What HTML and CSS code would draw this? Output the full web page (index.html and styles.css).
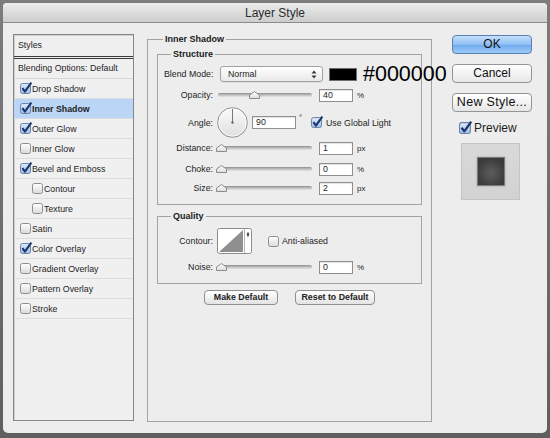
FILE: index.html
```html
<!DOCTYPE html>
<html>
<head>
<meta charset="utf-8">
<title>Layer Style</title>
<link rel="stylesheet" href="styles.css">
</head>
<body>
<svg class="defs" width="0" height="0" aria-hidden="true">
  <defs>
    <linearGradient id="g-off" x1="0" y1="0" x2="0" y2="1"><stop offset="0" stop-color="#ffffff"/><stop offset="1" stop-color="#dadada"/></linearGradient>
    <linearGradient id="g-on" x1="0" y1="0" x2="0" y2="1"><stop offset="0" stop-color="#dfeafa"/><stop offset="1" stop-color="#9fbfe8"/></linearGradient>
    <linearGradient id="g-thumb" x1="0" y1="0" x2="0" y2="1"><stop offset="0" stop-color="#ffffff"/><stop offset="1" stop-color="#dcdcdc"/></linearGradient>
    <linearGradient id="g-dial" x1="0" y1="0" x2="0" y2="1"><stop offset="0" stop-color="#fbfbfb"/><stop offset="1" stop-color="#dedede"/></linearGradient>
    <symbol id="cb-off" viewBox="0 0 12 12"><rect x="0.5" y="1.5" width="10" height="10" rx="2" fill="url(#g-off)" stroke="#8d8d8d"/></symbol>
    <symbol id="cb-on" viewBox="0 0 12 12"><rect x="0.5" y="1.5" width="10" height="10" rx="2" fill="url(#g-on)" stroke="#6c82a6"/><path d="M2.4 6.2 L4.9 9.6 L11.3 0.6" fill="none" stroke="#1c3670" stroke-width="2.1" stroke-linejoin="round"/></symbol>
    <symbol id="thumb" viewBox="0 0 11 8"><path d="M0.5 7.5 V4 L5.5 0.6 L10.5 4 V7.5 Z" fill="url(#g-thumb)" stroke="#8b8b8b"/></symbol>
  </defs>
</svg>
<div class="window">
  <div class="titlebar">Layer Style</div>
  <div class="body">
    <div class="styles">
      <div class="sl-head">Styles</div>
      <div class="sl-blend">Blending Options: Default</div>
      <div class="sl-row"><svg class="cb"><use href="#cb-on"/></svg>Drop Shadow</div>
      <div class="sl-row is-selected"><svg class="cb"><use href="#cb-on"/></svg>Inner Shadow</div>
      <div class="sl-row"><svg class="cb"><use href="#cb-on"/></svg>Outer Glow</div>
      <div class="sl-row"><svg class="cb"><use href="#cb-off"/></svg>Inner Glow</div>
      <div class="sl-row"><svg class="cb"><use href="#cb-on"/></svg>Bevel and Emboss</div>
      <div class="sl-row is-sub"><svg class="cb"><use href="#cb-off"/></svg>Contour</div>
      <div class="sl-row is-sub"><svg class="cb"><use href="#cb-off"/></svg>Texture</div>
      <div class="sl-row"><svg class="cb"><use href="#cb-off"/></svg>Satin</div>
      <div class="sl-row"><svg class="cb"><use href="#cb-on"/></svg>Color Overlay</div>
      <div class="sl-row"><svg class="cb"><use href="#cb-off"/></svg>Gradient Overlay</div>
      <div class="sl-row"><svg class="cb"><use href="#cb-off"/></svg>Pattern Overlay</div>
      <div class="sl-row"><svg class="cb"><use href="#cb-off"/></svg>Stroke</div>
    </div>

    <fieldset class="panel">
      <legend>Inner Shadow</legend>
      <fieldset class="group structure">
        <legend>Structure</legend>
        <div class="row r-a">
          <span class="lbl">Blend Mode:</span>
          <div class="sel"><span>Normal</span>
            <svg class="sel-arrows" width="6" height="9" viewBox="0 0 6 9"><path d="M0.5 3.5 L3 0.5 L5.5 3.5 Z M0.5 5.5 L3 8.5 L5.5 5.5 Z" fill="#3a3a3a"/></svg>
          </div>
          <span class="swatch"></span>
          <span class="hex">#000000</span>
        </div>
        <div class="row r-b">
          <span class="lbl">Opacity:</span>
          <div class="slider"><div class="track"></div><svg class="thumb" style="--v:0.4"><use href="#thumb"/></svg></div>
          <span class="num">40</span><span class="unit">%</span>
        </div>
        <div class="row r-c">
          <span class="lbl">Angle:</span>
          <svg class="dial" width="31" height="31" viewBox="0 0 31 31">
            <circle cx="15.5" cy="15.5" r="14.8" fill="url(#g-dial)" stroke="#8f8f8f"/>
            <circle cx="15.5" cy="15.5" r="13.6" fill="none" stroke="#ffffff" stroke-opacity="0.8"/>
            <line x1="15.5" y1="15.5" x2="15.5" y2="1.8" stroke="#777" stroke-width="1"/>
            <circle cx="15.5" cy="15.5" r="1.2" fill="#666"/>
          </svg>
          <span class="num wide">90</span><span class="deg">°</span>
          <svg class="cb"><use href="#cb-on"/></svg><span class="cb-text">Use Global Light</span>
        </div>
        <div class="row r-d">
          <span class="lbl">Distance:</span>
          <div class="slider"><div class="track"></div><svg class="thumb" style="--v:0"><use href="#thumb"/></svg></div>
          <span class="num">1</span><span class="unit">px</span>
        </div>
        <div class="row r-e">
          <span class="lbl">Choke:</span>
          <div class="slider"><div class="track"></div><svg class="thumb" style="--v:0"><use href="#thumb"/></svg></div>
          <span class="num">0</span><span class="unit">%</span>
        </div>
        <div class="row r-f">
          <span class="lbl">Size:</span>
          <div class="slider"><div class="track"></div><svg class="thumb" style="--v:0"><use href="#thumb"/></svg></div>
          <span class="num">2</span><span class="unit">px</span>
        </div>
      </fieldset>

      <fieldset class="group quality">
        <legend>Quality</legend>
        <div class="row r-contour">
          <span class="lbl">Contour:</span>
          <svg class="contour" width="35" height="26" viewBox="0 0 35 26">
            <rect x="0.5" y="0.5" width="34" height="25" rx="2" fill="#ffffff" stroke="#8c8c8c"/>
            <path d="M2 24 L26 2 L26 24 Z" fill="#8f8f8f"/>
            <line x1="27.5" y1="1" x2="27.5" y2="25" stroke="#b5b5b5"/>
            <path d="M29.6 5.5 H32.4 L31 9.5 Z" fill="#333"/>
            <line x1="31" y1="4" x2="31" y2="6" stroke="#333" stroke-width="0.8"/>
          </svg>
          <svg class="cb cb-anti"><use href="#cb-off"/></svg><span class="cb-text">Anti-aliased</span>
        </div>
        <div class="row r-noise">
          <span class="lbl">Noise:</span>
          <div class="slider"><div class="track"></div><svg class="thumb" style="--v:0"><use href="#thumb"/></svg></div>
          <span class="num">0</span><span class="unit">%</span>
        </div>
      </fieldset>

      <div class="defaults">
        <button class="btn-small w-make">Make Default</button>
        <button class="btn-small w-reset">Reset to Default</button>
      </div>
    </fieldset>

    <div class="actions">
      <button class="btn btn-ok">OK</button>
      <button class="btn">Cancel</button>
      <button class="btn btn-new">New Style...</button>
      <div class="preview-row"><svg class="cb cb-big"><use href="#cb-on"/></svg><span>Preview</span></div>
      <div class="preview"><div class="preview-swatch"></div></div>
    </div>
  </div>
</div>
</body>
</html>
```
FILE: styles.css
```css
* { box-sizing: border-box; }
html, body { margin: 0; height: 100%; }
body {
  background: linear-gradient(#7c7c7c, #5f5f5f);
  font-family: "Liberation Sans", Arial, sans-serif;
  font-size: 8.8px;
  color: #1e1e1e;
  overflow: hidden;
}
.defs { position: absolute; width: 0; height: 0; overflow: hidden; }

.window {
  margin: 3px 3px 0;
  height: 430px;
  background: #ededed;
  border-radius: 4px 4px 5px 5px;
  display: flex;
  flex-direction: column;
  overflow: hidden;
}
.titlebar {
  flex: none;
  height: 20px;
  border-bottom: 1px solid #8c8c8c;
  background: linear-gradient(#ececec, #cdcdcd);
  text-align: center;
  font-size: 12px;
  line-height: 20px;
  color: #2c2c2c;
}
.body {
  flex: 1;
  display: flex;
  align-items: stretch;
  padding: 11px 15px 12px 10px;
}

/* styles list */
.styles {
  flex: none;
  width: 121px;
  border: 1px solid #868686;
  box-shadow: inset 1px 1px 0 #d0d0d0;
  background: #f0f0f0;
}
.sl-head {
  height: 24px;
  border-bottom: 3px double #3a3a3a;
  padding-left: 4px;
  line-height: 21px;
}
.sl-blend {
  height: 20px;
  border-bottom: 1px solid #d6d6d6;
  padding-left: 4px;
  line-height: 19px;
}
.sl-row {
  height: 20px;
  border-bottom: 1px solid #dcdcdc;
  display: flex;
  align-items: center;
  padding-left: 6px;
}
.sl-row.is-sub { padding-left: 18px; }
.sl-row.is-selected { background: #bad5f6; font-weight: bold; }
.cb { flex: none; width: 12px; height: 12px; margin-top: -1px; }
.sl-row .cb { margin-right: 0; }

/* main panel */
fieldset { margin: 0; padding: 0; border: 1px solid #a3a3a3; min-width: 0; }
legend { padding: 0 2px; font-weight: bold; font-size: 9px; line-height: 12px; color: #1a1a1a; }
.panel {
  flex: none;
  width: 285px;
  margin: -1px 0 -1px 13px;
  padding: 3px 9px 0 9px;
}
.panel > legend { margin-left: 6px; }
.group { padding: 6px 9px 9px 6px; }
.group > legend { margin-left: 7px; }
.quality { margin-top: 5px; }

.row { display: flex; align-items: center; }
.lbl { flex: none; width: 49px; margin-right: 5px; text-align: right; white-space: nowrap; }
.r-a { height: 16px; }
.r-b { height: 14px; margin-top: 6px; }
.r-c { height: 31px; margin-top: 5px; }
.r-d { height: 14px; margin-top: 3px; }
.r-e { height: 14px; margin-top: 7px; }
.r-f { height: 14px; margin-top: 5px; }
.r-contour { height: 26px; }
.r-noise { height: 14px; margin-top: 6px; }

.sel {
  flex: none;
  margin-left: 2px;
  width: 103px;
  height: 16px;
  border: 1px solid #a2a2a2;
  border-radius: 3px;
  background: linear-gradient(#ffffff, #e9e9e9);
  box-shadow: 0 1px 0 rgba(0,0,0,0.06);
  display: flex;
  align-items: center;
  justify-content: space-between;
  padding: 0 5px 0 7px;
}
.swatch {
  flex: none;
  margin-left: 6px;
  width: 28px;
  height: 13px;
  background: #000;
  border: 1px solid #6e6e6e;
}
.hex {
  flex: none;
  margin-left: 6px;
  font-size: 21.5px;
  line-height: 16px;
  color: #000;
  white-space: nowrap;
}

.slider { flex: none; position: relative; width: 94px; height: 14px; }
.track {
  margin-top: 5px;
  height: 4px;
  border-radius: 2px;
  background: linear-gradient(#8e8e8e, #c4c4c4 55%, #e3e3e3);
}
.thumb {
  position: absolute;
  top: 3px;
  left: calc((100% - 11px) * var(--v) - 2px);
  width: 11px;
  height: 8px;
}
.num {
  flex: none;
  margin-left: 7px;
  width: 34px;
  height: 13px;
  border: 1px solid #8f8f8f;
  background: #fff;
  box-shadow: inset 0 1px 1px rgba(0,0,0,0.12);
  padding-left: 3px;
  line-height: 11px;
}
.num.wide { margin-left: 4px; width: 44px; }
.unit { flex: none; margin-left: 4px; font-size: 8px; }
.dial { flex: none; margin-left: -1px; }
.deg { flex: none; width: 15px; padding-left: 3px; align-self: flex-start; margin-top: 7px; font-size: 8px; line-height: 8px; }
.cb-text { margin-left: 3px; white-space: nowrap; }
.contour { flex: none; margin-left: -1px; }
.cb-anti { margin-left: 16px; }
.r-contour .cb-text { margin-left: 2px; }

.defaults {
  margin-top: 6px;
  display: flex;
  justify-content: center;
  gap: 17px;
}
.btn-small {
  height: 15px;
  border: 1px solid #8e8e8e;
  border-radius: 4px;
  background: linear-gradient(#ffffff, #e3e3e3);
  font-family: inherit;
  font-size: 8.8px;
  font-weight: bold;
  color: #222;
  padding: 0;
  line-height: 13px;
}
.w-make { width: 74px; }
.w-reset { width: 80px; }

/* right column */
.actions {
  flex: none;
  width: 80px;
  margin-left: 20px;
  margin-top: 1px;
  display: flex;
  flex-direction: column;
}
.btn {
  height: 19px;
  margin-bottom: 10px;
  border: 1px solid #959595;
  border-radius: 4px;
  background: linear-gradient(#ffffff, #e6e6e6);
  font-family: inherit;
  font-size: 12px;
  color: #111;
  padding: 0;
  line-height: 17px;
}
.btn-ok {
  border-color: #5a7fb6;
  background: linear-gradient(#c7e0fb, #8dbdf3 50%, #6ea9ef 51%, #9ccaf8);
}
.btn-new { font-size: 12.5px; letter-spacing: 0.3px; }
.preview-row {
  display: flex;
  align-items: center;
  height: 11px;
  margin-left: 7px;
  font-size: 12px;
}
.cb-big { width: 13px; height: 13px; margin-right: 2px; }
.preview {
  margin: 10px 0 0 9px;
  width: 59px;
  height: 57px;
  border: 1px solid #c4c4c4;
  background: linear-gradient(#d9d9d9, #d2d2d2);
  display: flex;
  align-items: center;
  justify-content: center;
}
.preview-swatch {
  width: 28px;
  height: 29px;
  background: radial-gradient(circle at 50% 55%, #5c5c5c, #3b3b3b 75%);
  border: 1px solid #7a7a7a;
  box-shadow: 0 0 2px rgba(0,0,0,0.25);
}
```
